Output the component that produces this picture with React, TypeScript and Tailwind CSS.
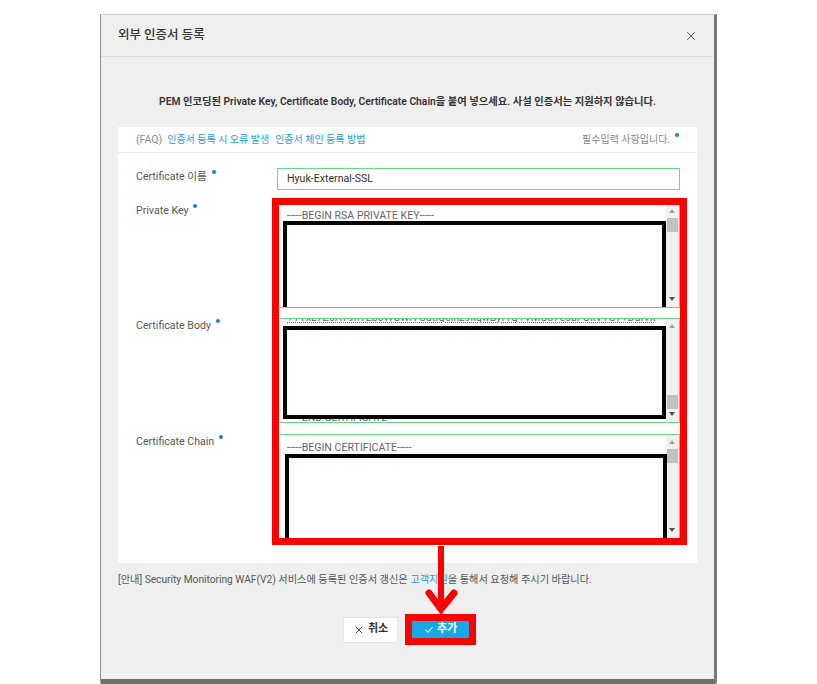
import { X, Check } from "lucide-react";

function Dot() {
  return <span className="ml-[5px] inline-block h-[4px] w-[4px] -translate-y-[5px] rounded-full bg-[#1f80d8] align-middle" />;
}

function Scrollbar({ thumbTop }: { thumbTop: number }) {
  return (
    <div className="absolute right-0 top-0 bottom-0 w-[13px] bg-[#f1f1f1]">
      <div className="absolute left-[3px] top-[5px] h-0 w-0 border-x-[3.5px] border-b-[4px] border-x-transparent border-b-[#a3a3a3]" />
      <div className="absolute left-[1px] w-[11px] h-[14px] bg-[#c1c1c1]" style={{ top: thumbTop }} />
      <div className="absolute left-[3px] bottom-[6px] h-0 w-0 border-x-[3.5px] border-t-[4px] border-x-transparent border-t-[#505050]" />
    </div>
  );
}

function Redact({ className }: { className: string }) {
  return <div className={`absolute border-4 border-black bg-white ${className}`} />;
}

export default function App() {
  return (
    <div className="min-h-[684px] bg-white pl-[100px] pt-[14px] font-[Roboto,'Noto_Sans_CJK_KR',sans-serif]">
      <div className="relative flex h-[670px] w-[617px] flex-col border-t border-l border-t-[#cfcfcf] border-l-[#8c8c8c] border-r-[3px] border-r-[#7a7a7a] border-b-[5px] border-b-[#6e6e6e] bg-[#efefef] rounded-b-[2px]">
        {/* Header */}
        <div className="flex h-[42px] items-center justify-between border-b border-[#dedede] pl-[17px] pr-[16px]">
          <h1 className="text-[12.5px] font-medium text-[#333]">외부 인증서 등록</h1>
          <X size={14} strokeWidth={1.7} className="text-[#555]" />
        </div>

        <p className="pt-[37px] text-center text-[10.3px] leading-[16px] font-semibold text-[#333]">
          PEM 인코딩된 Private Key, Certificate Body, Certificate Chain을 붙여 넣으세요. 사설 인증서는 지원하지 않습니다.
        </p>

        {/* Card */}
        <div className="relative mx-[17px] mt-[17px] h-[436px] bg-white">
          <div className="flex h-[26px] items-center justify-between border-b border-[#ececec] px-[18px] text-[10px]">
            <div className="flex gap-[5px]">
              <span className="text-[#8a8a8a] text-[10.5px]">(FAQ)</span>
              <span className="text-[#1a9ee0]">인증서 등록 시 오류 발생</span>
              <span className="ml-[1px] text-[#1a9ee0]">인증서 체인 등록 방법</span>
            </div>
            <span className="text-[#888]">
              필수입력 사항입니다.
              <Dot />
            </span>
          </div>

          <div className="grid grid-cols-[141px_403px] pl-[18px] pt-[15px] text-[10.6px] text-[#555]">
            <div className="pt-[2px] leading-[14px]">
              Certificate 이름
              <Dot />
            </div>
            <div className="flex h-[22px] items-center border border-[#66d983] pl-[9px] text-[#333]">Hyuk-External-SSL</div>

            <div className="mt-[13px] pt-[1px] leading-[14px]">
              Private Key
              <Dot />
            </div>
            <div className="relative mt-[13px] h-[105px] overflow-hidden border border-[#66d983] leading-[14px] text-[#666]">
              <div className="pl-[9px] pt-[5px]">-----BEGIN RSA PRIVATE KEY-----</div>
              <Scrollbar thumbTop={14} />
              <Redact className="left-[5px] top-[17px] h-[90px] w-[383px]" />
            </div>

            <div className="mt-[10px] pt-[1px] leading-[14px]">
              Certificate Body
              <Dot />
            </div>
            <div className="relative mt-[10px] h-[105px] overflow-hidden border border-[#66d983] leading-[14px] text-[#666]">
              <div className="-mt-[8px] pl-[9px] underline decoration-dotted decoration-[#e33] underline-offset-[1px]">
                +YYxL7Z0AY9hTEb0WCWr7GutiQclnz9kqwByf1Q+VMG37e0bFOkVYG7+DuIVk
              </div>
              <div className="absolute left-[9px] top-[92px]">-----END CERTIFICATE-----</div>
              <Scrollbar thumbTop={76} />
              <Redact className="left-[5px] top-[7px] h-[93px] w-[383px]" />
            </div>

            <div className="mt-[11px] pt-[1px] leading-[14px]">
              Certificate Chain
              <Dot />
            </div>
            <div className="relative mt-[11px] h-[105px] overflow-hidden border border-[#66d983] leading-[14px] text-[#666]">
              <div className="pl-[9px] pt-[6px]">-----BEGIN CERTIFICATE-----</div>
              <Scrollbar thumbTop={14} />
              <Redact className="left-[7px] top-[19px] h-[90px] w-[382px]" />
            </div>
          </div>

          {/* annotation box */}
          <div className="absolute left-[154px] top-[71px] h-[347px] w-[415px] border-[7px] border-[#ff0000]" />
        </div>

        <p className="mt-[10px] pl-[17px] text-[10.2px] leading-[14px] text-[#555]">
          [안내] Security Monitoring WAF(V2) 서비스에 등록된 인증서 갱신은 <span className="text-[#1a9ee0]">고객지원</span>을 통해서 요청해 주시기 바랍니다.
        </p>

        <div className="mt-[27px] flex items-center justify-center gap-[8px] pl-[5px]">
          <button className="flex h-[24px] w-[53px] items-center justify-center gap-[3px] bg-white text-[11px] font-semibold text-[#333] shadow-[0_0_0_1px_#e6e6e6]">
            <X size={12} strokeWidth={1.8} />
            취소
          </button>
          <div className="border-[7px] border-[#ff0000]">
            <button className="flex h-[17px] w-[57px] items-center justify-center gap-[3px] bg-[#17a9e6] text-[11px] font-semibold text-white">
              <Check size={10} strokeWidth={2.5} />
              추가
            </button>
          </div>
        </div>

        {/* annotation arrow */}
        <svg className="absolute left-[321px] top-[531px]" width="40" height="80" viewBox="0 0 40 80">
          <line x1="19" y1="0" x2="19" y2="62" stroke="#ff0000" strokeWidth="6" />
          <polyline points="7,47 19,63 32,47" fill="none" stroke="#ff0000" strokeWidth="7" strokeLinecap="round" strokeLinejoin="miter" />
        </svg>
      </div>
    </div>
  );
}
